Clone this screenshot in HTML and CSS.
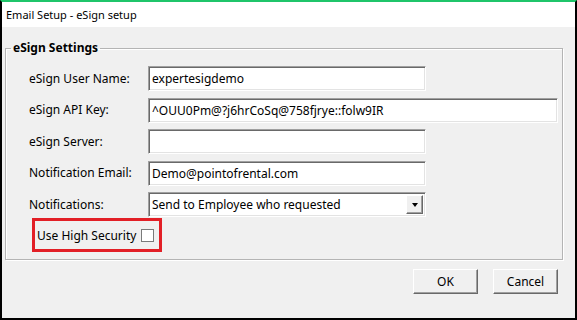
FILE: index.html
```html
<!DOCTYPE html>
<html lang="en">
<head>
    <meta charset="UTF-8">
    <title>Email Setup - eSign setup</title>
    <link rel="stylesheet" href="styles.css">
</head>
<body>

    <div class="window">
        <div class="titlebar">Email Setup - eSign setup</div>

        <div class="dialog">
            <fieldset class="group">
                <legend>eSign Settings</legend>

                <div class="form">
                    <label class="label" for="userName">eSign User Name:</label>
                    <input class="field" id="userName" type="text" value="expertesigdemo">

                    <label class="label" for="apiKey">eSign API Key:</label>
                    <input class="field wide" id="apiKey" type="text" value="^OUU0Pm@?j6hrCoSq@758fjrye::folw9IR">

                    <label class="label" for="server">eSign Server:</label>
                    <input class="field" id="server" type="text" value="">

                    <label class="label" for="notifyEmail">Notification Email:</label>
                    <input class="field" id="notifyEmail" type="text" value="Demo@pointofrental.com">

                    <span class="label">Notifications:</span>
                    <div class="combo">
                        <span class="combo-text">Send to Employee who requested</span>
                        <span class="combo-btn"><span class="arrow"></span></span>
                    </div>
                </div>

                <div class="highlight">
                    <label class="check-label">Use High Security <span class="checkbox"></span></label>
                </div>
            </fieldset>

            <div class="buttons">
                <button class="btn">OK</button>
                <button class="btn">Cancel</button>
            </div>
        </div>
    </div>

</body>
</html>
```

FILE: styles.css
```css
* {
    margin: 0;
    padding: 0;
    box-sizing: border-box;
}

body {
    background-color: #fff;
    font-family: 'Noto Sans', 'Open Sans', sans-serif;
    font-size: 12px;
    color: #000;
}

.window {
    width: 577px;
    height: 320px;
    border: 2px solid #000;
    border-top: 2px solid #1fc56a;
    display: flex;
    flex-direction: column;
}

.titlebar {
    height: 25px;
    background-color: #fff;
    padding-left: 4px;
    line-height: 25px;
    font-size: 11px;
}

.dialog {
    flex: 1;
    background-color: #f0f0f0;
    padding: 13px 0 0 3px;
}

.group {
    width: 558px;
    height: 220px;
    border: 1px solid #b4b4b4;
    box-shadow: 1px 1px 0 #fff, inset 1px 1px 0 #fff;
    padding: 0;
}

.group legend {
    margin-left: 5px;
    padding: 0 2px;
    font-weight: bold;
    line-height: 16px;
}

.form {
    display: grid;
    grid-template-columns: 119px auto;
    grid-auto-rows: 25px;
    row-gap: 6.5px;
    align-items: center;
    justify-items: start;
    padding: 10px 0 0 23px;
}

.label {
    line-height: 16px;
}

.field {
    width: 278px;
    height: 25px;
    background-color: #fff;
    border: 1px solid;
    border-color: #a0a0a0 #fff #fff #a0a0a0;
    box-shadow: inset 1px 1px 0 #696969, inset -1px -1px 0 #e3e3e3;
    padding: 0 3px;
    font-family: inherit;
    font-size: 12px;
    color: #000;
    outline: none;
}

.field.wide {
    width: 410px;
}

.combo {
    width: 278px;
    height: 25px;
    display: flex;
    align-items: stretch;
    background-color: #fff;
    border: 1px solid;
    border-color: #a0a0a0 #fff #fff #a0a0a0;
    box-shadow: inset 1px 1px 0 #696969, inset -1px -1px 0 #e3e3e3;
    padding: 2px 2px 2px 3px;
}

.combo-text {
    flex: 1;
    line-height: 19px;
}

.combo-btn {
    width: 17px;
    display: flex;
    align-items: center;
    justify-content: center;
    background-color: #f0f0f0;
    border: 1px solid;
    border-color: #fff #696969 #696969 #fff;
    box-shadow: inset -1px -1px 0 #a0a0a0;
}

.arrow {
    width: 0;
    height: 0;
    border-left: 3.5px solid transparent;
    border-right: 3.5px solid transparent;
    border-top: 4px solid #000;
}

.highlight {
    width: 130px;
    height: 34px;
    margin: 1px 0 0 26px;
    border: 3px solid #e21f26;
    display: flex;
    align-items: center;
    padding-left: 2px;
}

.check-label {
    display: flex;
    align-items: center;
    gap: 5px;
    white-space: nowrap;
    font-size: 12px;
}

.checkbox {
    width: 13px;
    height: 13px;
    flex-shrink: 0;
    background-color: #fff;
    border: 1px solid #7a7a7a;
}

.buttons {
    display: flex;
    justify-content: flex-end;
    gap: 15px;
    padding: 9px 17px 0 0;
}

.btn {
    width: 65px;
    height: 25px;
    background-color: #f0f0f0;
    border: 1px solid;
    border-color: #fff #696969 #696969 #fff;
    box-shadow: inset -1px -1px 0 #a0a0a0;
    font-family: inherit;
    font-size: 12px;
    color: #000;
}
```
